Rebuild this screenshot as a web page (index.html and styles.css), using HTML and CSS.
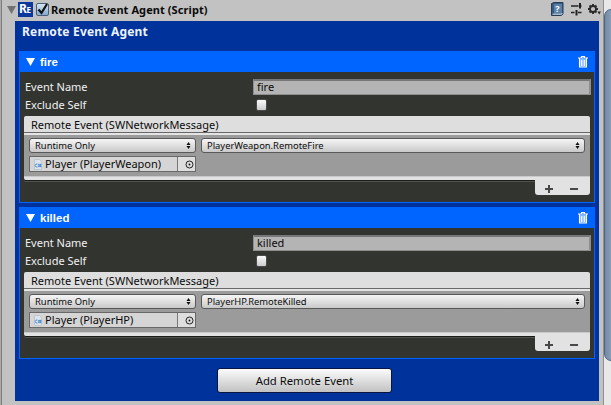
FILE: index.html
```
<!DOCTYPE html>
<html lang="en">
<head>
<meta charset="utf-8">
<title>Remote Event Agent</title>
<link rel="stylesheet" href="styles.css">
</head>
<body>
<div class="window">
  <main class="inspector">
    <header class="component">
      <svg class="fold" width="9" height="8" viewBox="0 0 9 8"><path d="M0 0h9L4.500 8z" fill="#727272"/></svg>
      <span class="logo">R<small>E</small></span>
      <span class="check on"><svg width="13" height="14" viewBox="0 0 13 14"><path d="M2.500 7.500l3 3.500L11 2" fill="none" stroke="#111" stroke-width="2.200"/></svg></span>
      <h1>Remote Event Agent (Script)</h1>
      <svg class="tools" width="54" height="16" viewBox="0 0 54 16">
        <path d="M1.500 2.500L4 1.500h9v11.500l-2 1.500H1.500z" fill="#385a80" stroke="#263d55"/>
        <path d="M4 3h8v9.500H4z" fill="#5c82a8"/><path d="M2.500 13.200h8.500l1.500-.7" stroke="#dce6ee" fill="none"/>
        <text x="5.200" y="11" class="help">?</text>
        <path d="M21 5h7.500M30 5h1.500M21 11.500h3.500M28 11.500h3.500" stroke="#222" stroke-width="1.500"/>
        <path d="M30 2v5.500M26.500 9v5.500" stroke="#222" stroke-width="2"/>
        <circle cx="43" cy="8" r="3" fill="none" stroke="#2b2b2b" stroke-width="1.800"/>
        <path d="M43 3v2M43 11v2M38 8h2M46 8h2M39.500 4.500l1.400 1.400M45.100 10.100l1.400 1.400M46.500 4.500l-1.400 1.400M40.900 10.100l-1.400 1.400" stroke="#2b2b2b" stroke-width="1.900"/>
        <path d="M47.500 10.500h3.500L49.200 13.500z" fill="#222"/>
      </svg>
    </header>
    <section class="agent">
      <h2>Remote Event Agent</h2>
      <article class="event">
        <div class="bar">
          <svg width="9" height="8" viewBox="0 0 9 8"><path d="M0 0h9L4.500 8z" fill="#fff"/></svg>
          <h3>fire</h3>
          <svg class="trash" width="10" height="12" viewBox="0 0 10 12"><path d="M2 3h6v7.500H2z" fill="#8db7ff"/><path d="M0 2h10M3.500 1.500V.5h3v1M1.500 2.500v8.500h7V2.500M3.700 4v6M6.300 4v6" fill="none" stroke="#fff" stroke-width="1.100"/></svg>
        </div>
        <div class="fields">
          <div class="row"><label>Event Name</label><span class="input">fire</span></div>
          <div class="row second"><label>Exclude Self</label><span class="check"></span></div>
        </div>
        <div class="list">
          <div class="caption"><span>Remote Event (SWNetworkMessage)</span></div>
          <div class="body">
            <div class="line">
              <div class="drop mode"><span>Runtime Only</span><svg width="5" height="7" viewBox="0 0 5 7"><path d="M.5 3L2.500 0l2 3zM.5 4h4l-2 3z" fill="#111"/></svg></div>
              <div class="drop method"><span>PlayerWeapon.RemoteFire</span><svg width="5" height="7" viewBox="0 0 5 7"><path d="M.5 3L2.500 0l2 3zM.5 4h4l-2 3z" fill="#111"/></svg></div>
            </div>
            <div class="object">
              <span class="value"><svg width="8" height="11" viewBox="0 0 8 11"><path d="M.5.5h5l2 2v8h-7z" fill="#dce5ee" stroke="#bcc6cf"/><path d="M3.500 5H2L1.300 6.500 2 8h1.500M4 5.700h3.500M4 7.300h3.500M5 4.800v3.400M6.500 4.800v3.400" fill="none" stroke="#548fd3"/></svg><span>Player (PlayerWeapon)</span></span>
              <span class="pick"><svg width="9" height="9" viewBox="0 0 9 9"><circle cx="4.500" cy="4.500" r="3.500" fill="none" stroke="#222"/><circle cx="4.500" cy="4.500" r=".9" fill="#111"/></svg></span>
            </div>
          </div>
          <div class="base"></div>
        </div>
        <div class="foot"><svg width="55" height="15" viewBox="0 0 55 15"><path d="M10 9h8M14 5v8M35 9h8" stroke="#484848" stroke-width="2"/></svg></div>
      </article>
      <article class="event">
        <div class="bar">
          <svg width="9" height="8" viewBox="0 0 9 8"><path d="M0 0h9L4.500 8z" fill="#fff"/></svg>
          <h3>killed</h3>
          <svg class="trash" width="10" height="12" viewBox="0 0 10 12"><path d="M2 3h6v7.500H2z" fill="#8db7ff"/><path d="M0 2h10M3.500 1.500V.5h3v1M1.500 2.500v8.500h7V2.500M3.700 4v6M6.300 4v6" fill="none" stroke="#fff" stroke-width="1.100"/></svg>
        </div>
        <div class="fields">
          <div class="row"><label>Event Name</label><span class="input">killed</span></div>
          <div class="row second"><label>Exclude Self</label><span class="check"></span></div>
        </div>
        <div class="list">
          <div class="caption"><span>Remote Event (SWNetworkMessage)</span></div>
          <div class="body">
            <div class="line">
              <div class="drop mode"><span>Runtime Only</span><svg width="5" height="7" viewBox="0 0 5 7"><path d="M.5 3L2.500 0l2 3zM.5 4h4l-2 3z" fill="#111"/></svg></div>
              <div class="drop method"><span>PlayerHP.RemoteKilled</span><svg width="5" height="7" viewBox="0 0 5 7"><path d="M.5 3L2.500 0l2 3zM.5 4h4l-2 3z" fill="#111"/></svg></div>
            </div>
            <div class="object">
              <span class="value"><svg width="8" height="11" viewBox="0 0 8 11"><path d="M.5.5h5l2 2v8h-7z" fill="#dce5ee" stroke="#bcc6cf"/><path d="M3.500 5H2L1.300 6.500 2 8h1.500M4 5.700h3.500M4 7.300h3.500M5 4.800v3.400M6.500 4.800v3.400" fill="none" stroke="#548fd3"/></svg><span>Player (PlayerHP)</span></span>
              <span class="pick"><svg width="9" height="9" viewBox="0 0 9 9"><circle cx="4.500" cy="4.500" r="3.500" fill="none" stroke="#222"/><circle cx="4.500" cy="4.500" r=".9" fill="#111"/></svg></span>
            </div>
          </div>
          <div class="base"></div>
        </div>
        <div class="foot"><svg width="55" height="15" viewBox="0 0 55 15"><path d="M10 9h8M14 5v8M35 9h8" stroke="#484848" stroke-width="2"/></svg></div>
      </article>
      <button class="add">Add Remote Event</button>
    </section>
  </main>
  <aside class="scroll"><div class="thumb"></div></aside>
</div>
</body>
</html>
```
FILE: styles.css
```
* { box-sizing: border-box; }
body { margin: 0; font-family: "Noto Sans", "Open Sans", sans-serif; font-size: 11px; color: #0b0b0b; overflow: hidden; }
svg { display: block; flex: none; }
h1, h2, h3 { margin: 0; }
.window { display: flex; width: 611px; height: 405px; background: #c2c2c2; overflow: hidden; }
.inspector { width: 603px; flex: none; border-left: 1px solid #aaa; box-shadow: inset 1px 0 #7d7d7d; }
.component { display: flex; align-items: center; height: 21px; padding-left: 6px; white-space: nowrap; }
.component > * { flex: none; }
.fold { margin-top: -2px; }
.logo { width: 15px; height: 15px; margin: -3px 0 0 2px; padding-left: 1px; background: #0a389c; color: #fff; font: bold 12px/14px "Noto Sans", sans-serif; letter-spacing: -.5px; }
.logo small { font-size: 8px; }
.check { width: 11px; height: 12px; border: 1px solid #4b4b4b; border-radius: 2px; background: linear-gradient(#fafafa, #ccc); }
.check.on { width: 13px; height: 13px; margin: -3px 0 0 3px; border-color: #4b5f74; background: linear-gradient(#d5e4f2, #82aad2); }
.check.on svg { margin: -2px 0 0 -1px; }
h1 { width: 170px; margin: -2px 0 0 2px; font-size: 11px; line-height: 16px; letter-spacing: .08px; }
.tools { margin: -3px -1px 0 auto; }
.help { font: bold 9px "Noto Sans", sans-serif; fill: #fff; }
.agent { display: flex; flex-direction: column; width: 584px; height: 380px; margin-left: 14px; padding: 0 4px; background: #00329b; }
h2 { height: 30px; padding-left: 3px; color: #edf3ff; font-size: 12px; line-height: 21px; letter-spacing: .18px; }
.event { height: 152px; margin-bottom: 4px; border: 1px solid #0064ff; background: #323430; flex: none; }
.bar { display: flex; align-items: center; height: 20px; padding: 0 6px; background: #0064ff; color: #fff; }
.bar h3 { margin-left: 5px; font: bold 11.500px/20px "Liberation Sans", sans-serif; }
.trash { margin-left: auto; }
.fields { height: 44px; padding: 7px 3px 0 5px; color: #f1f1f1; }
.row { display: flex; align-items: center; height: 16px; }
.row label { width: 228px; line-height: 16px; }
.input { width: 338px; height: 16px; padding-left: 3px; border: 1px solid #8e8e8e; border-top: 2px solid #777; border-right-width: 2px; background: #b4b4b4; color: #0b0b0b; line-height: 12px; }
.second { margin-top: 2px; }
.second .check { margin-left: 3px; }
.list { width: 566px; height: 64px; margin-left: 4px; border-radius: 2px 2px 0 2px; overflow: hidden; box-shadow: 0 1px #1b1c1a, 0 2px #50524e; }
.caption { height: 17px; padding-left: 7px; border-bottom: 1px solid #686868; background: #dedede; line-height: 17px; }
.body { height: 43px; padding: 5px; border-top: 2px solid #e4e4e4; background: #9b9b9b; }
.base { height: 4px; background: #e2e2e2; border-top: 1px solid #c9c9c9; }
.line { display: flex; gap: 5px; }
.drop { display: flex; align-items: center; justify-content: space-between; height: 15px; margin-top: -2px; padding: 0 4px 0 5px; border: 1px solid #595959; border-radius: 3px; background: linear-gradient(#f6f6f6, #c9c9c9); font-size: 9.400px; line-height: 13px; }
.mode { width: 167px; }
.method { width: 384px; }
.object { display: flex; width: 167px; height: 16px; margin-top: 3px; border: 1px solid #686868; background: #d5d5d5; }
.value { display: flex; align-items: center; width: 147px; padding-left: 4px; gap: 3px; line-height: 14px; }
.pick { display: flex; align-items: center; justify-content: center; flex: 1; border-left: 1px solid #777; background: #dedede; padding-left: 5px; }
.foot { width: 55px; height: 15px; margin-left: 515px; border-radius: 0 0 3px 3px; background: #e2e2e2; position: relative; }
.add { align-self: center; width: 175px; height: 25px; margin: 5px 0 0 -5px; padding: 0; border: 1px solid #071540; border-radius: 3px; background: linear-gradient(#fbfbfb, #c2c2c2); color: #0b0b0b; font: 11.300px/20px "Noto Sans", sans-serif; }
.scroll { width: 8px; padding: 9px 0 0 0; border-left: 1px solid #8f8f8f; background: #e8e8e8; overflow: hidden; }
.thumb { width: 15px; height: 352px; border: 1px solid #50647e; border-radius: 7px; background: linear-gradient(90deg, #7189a5, #a4b7cd); }
```
